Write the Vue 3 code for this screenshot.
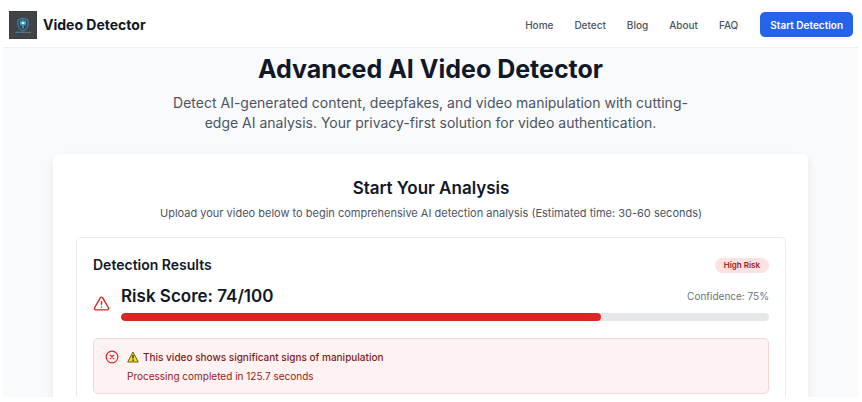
<template>
  <div class="page">
    <header class="site-header">
      <a class="brand" href="#">
        <svg class="logo" viewBox="0 0 28 28" aria-hidden="true">
          <rect width="28" height="28" fill="#393c40" />
          <rect x="1" y="1" width="26" height="26" fill="#414346" />
          <path d="M14 7l5 2v4c0 3.500-2 5.500-5 7-3-1.500-5-3.500-5-7V9z" fill="#244a63" stroke="#4a9fc9" stroke-width=".8" />
          <path d="M12 9.500v5M16 9.500v5M11 12h6M14 8.500v9" stroke="#7ed0f2" stroke-width=".9" />
          <circle cx="14" cy="12" r="1.200" fill="#d6f2ff" />
          <path d="M6.500 21.300h5" stroke="#2f8db5" stroke-width="1.200" />
          <path d="M12 21.300h10" stroke="#7d8990" stroke-width="1" stroke-dasharray="1.500 .4" />
        </svg>
        <span>Video Detector</span>
      </a>
      <nav class="nav">
        <a v-for="link in links" :key="link" href="#">{{ link }}</a>
        <button type="button" class="cta">Start Detection</button>
      </nav>
    </header>

    <main class="content">
      <section class="hero">
        <h1>Advanced AI Video Detector</h1>
        <p>
          Detect AI-generated content, deepfakes, and video manipulation with cutting-edge AI
          analysis. Your privacy-first solution for video authentication.
        </p>
      </section>

      <section class="card">
        <h2>Start Your Analysis</h2>
        <p class="card-intro">
          Upload your video below to begin comprehensive AI detection analysis (Estimated time: 30-60 seconds)
        </p>

        <div class="results">
          <div class="results-head">
            <h3>Detection Results</h3>
            <span class="badge">High Risk</span>
          </div>

          <div class="score">
            <svg class="score-icon" viewBox="0 0 24 24" aria-hidden="true">
              <path d="m21.730 18-8-14a2 2 0 0 0-3.480 0l-8 14A2 2 0 0 0 4 21h16a2 2 0 0 0 1.730-3Z" />
              <path d="M12 9v4M12 17h.01" />
            </svg>
            <div class="score-body">
              <div class="score-row">
                <strong>Risk Score: {{ result.score }}/100</strong>
                <span>Confidence: {{ result.confidence }}%</span>
              </div>
              <div class="bar">
                <div class="bar-fill" :style="{ width: result.score + '%' }"></div>
              </div>
            </div>
          </div>

          <div class="alert" role="alert">
            <svg class="alert-icon" viewBox="0 0 24 24" aria-hidden="true">
              <circle cx="12" cy="12" r="10" />
              <path d="m15 9-6 6M9 9l6 6" />
            </svg>
            <div>
              <p class="alert-title">
                <svg class="warning" viewBox="0 0 12 12" aria-hidden="true">
                  <path d="M6 1 11.300 11H.7z" fill="#f5dc1c" stroke="#57501c" stroke-width=".9" stroke-linejoin="round" />
                  <path d="M6 4v3.600M6 8.600v1.300" stroke="#222" stroke-width="1.300" />
                </svg>
                This video shows significant signs of manipulation
              </p>
              <p class="alert-text">Processing completed in {{ result.seconds }} seconds</p>
            </div>
          </div>
        </div>
      </section>
    </main>
  </div>
</template>

<script setup>
const links = ['Home', 'Detect', 'Blog', 'About', 'FAQ']

const result = {
  score: 74,
  confidence: 75,
  seconds: 125.7,
}
</script>

<style>
body {
  background: #fff;
}
</style>

<style scoped>
.page {
  display: flex;
  flex-direction: column;
  height: 100vh;
  box-sizing: border-box;
  padding: 0 4px 5px 3px;
  overflow: hidden;
  color: #111827;
  font-family: Inter, "Liberation Sans", sans-serif;
}

h1,
h2,
h3,
p {
  margin: 0;
}

.site-header {
  display: flex;
  flex-shrink: 0;
  align-items: center;
  justify-content: space-between;
  height: 47px;
  padding: 2px 5px 0 6px;
  box-sizing: border-box;
  background: #fff;
}

.brand {
  display: flex;
  align-items: center;
  gap: 6px;
  color: #111827;
  font-size: 14px;
  font-weight: 700;
  text-decoration: none;
}

.logo {
  width: 28px;
  height: 28px;
}

.nav {
  display: flex;
  align-items: center;
  gap: 21px;
}

.nav a {
  color: #4b5563;
  font-size: 10px;
  font-weight: 500;
  text-decoration: none;
}

.cta {
  height: 25px;
  margin-left: 1px;
  padding: 0 10px;
  color: #fff;
  background: #2563eb;
  border: 0;
  border-radius: 5px;
  font-family: inherit;
  font-size: 10px;
  font-weight: 600;
}

.content {
  flex: 1;
  min-height: 0;
  padding: 0 50px;
  overflow: hidden;
  background: #f9fafc;
  border-top: 1px solid #eceef1;
}

.hero {
  max-width: 540px;
  margin: 0 auto;
  padding: 4px 0 21px;
  text-align: center;
}

h1 {
  font-size: 25px;
  font-weight: 700;
  line-height: 34px;
}

.hero p {
  margin-top: 7px;
  color: #4b5563;
  font-size: 14px;
  line-height: 20px;
}

.card {
  padding: 23px 22px 40px 23px;
  background: #fff;
  border-radius: 6px;
  box-shadow: 0 4px 10px rgba(17, 24, 39, .08);
}

h2 {
  font-size: 17px;
  font-weight: 600;
  line-height: 22px;
  text-align: center;
}

.card-intro {
  margin-top: 6px;
  color: #4b5563;
  font-size: 11px;
  line-height: 16px;
  text-align: center;
}

.results {
  margin-top: 16px;
  padding: 16px 16px 32px;
  border: 1px solid #e9ebee;
  border-radius: 5px;
}

.results-head,
.score-row {
  display: flex;
  align-items: center;
  justify-content: space-between;
}

h3 {
  font-size: 14px;
  font-weight: 600;
  line-height: 22px;
}

.badge {
  padding: 0 9px;
  color: #991b1b;
  background: #fee2e2;
  border-radius: 8px;
  font-size: 8px;
  font-weight: 600;
  line-height: 15px;
}

.score {
  display: flex;
  align-items: center;
  gap: 11px;
  margin-top: 9px;
}

.score-icon {
  flex-shrink: 0;
  width: 17px;
  height: 17px;
}

.score-icon,
.alert-icon {
  fill: none;
  stroke: #dc2626;
  stroke-width: 2;
  stroke-linecap: round;
  stroke-linejoin: round;
}

.score-body {
  flex: 1;
}

.score-row strong {
  font-size: 17px;
  font-weight: 600;
  line-height: 22px;
}

.score-row span {
  color: #6b7280;
  font-size: 10px;
}

.bar {
  height: 8px;
  margin-top: 6px;
  overflow: hidden;
  background: #e5e7eb;
  border-radius: 4px;
}

.bar-fill {
  height: 100%;
  background: #dc2626;
  border-radius: 4px;
}

.alert {
  display: flex;
  align-items: flex-start;
  gap: 8px;
  margin-top: 17px;
  padding: 11px 11px 10px;
  background: #fef2f2;
  border: 1px solid #fbd5d5;
  border-radius: 5px;
}

.alert-icon {
  flex-shrink: 0;
  width: 14px;
  height: 14px;
}

.alert p {
  color: #991b1b;
  font-size: 10px;
  line-height: 14px;
}

.alert .alert-title {
  display: flex;
  align-items: center;
  gap: 4px;
  color: #7f1d1d;
  font-weight: 500;
}

.alert .alert-text {
  margin-top: 5px;
}

.warning {
  width: 12px;
  height: 12px;
}
</style>
